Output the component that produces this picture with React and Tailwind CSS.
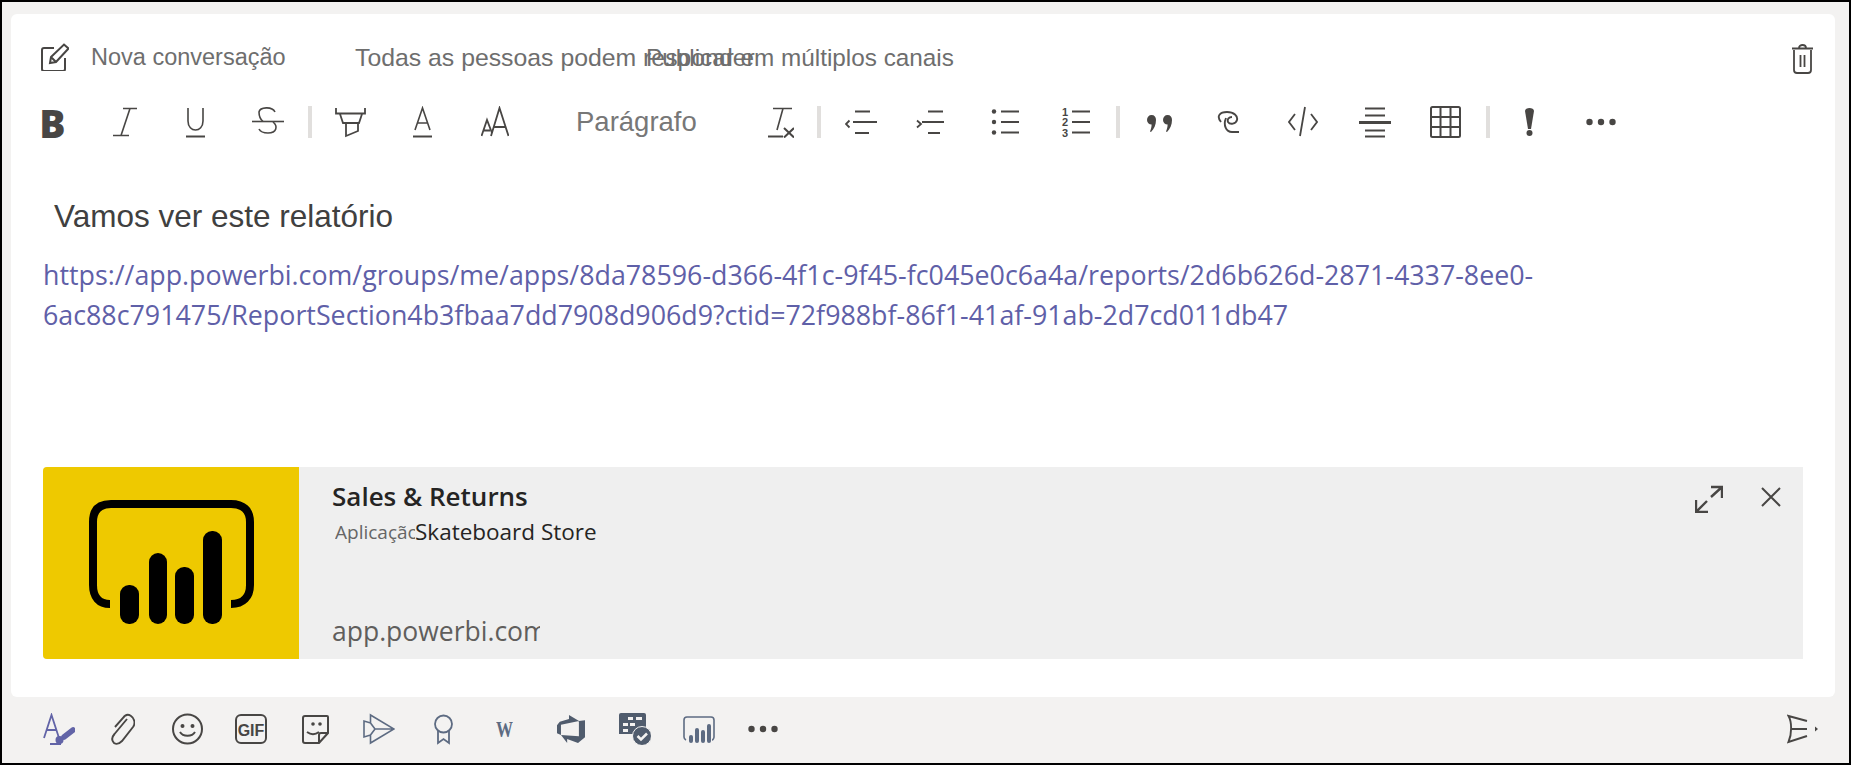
import React from 'react';
import { VscAzureDevops } from 'react-icons/vsc';

const INK = '#484644';
const SLATE = '#5d6b82';

// every toolbar icon is drawn in a box of w x h px, so it lines up with the row
const Ico = ({ w, h = 32, className = '', children, color = INK, sw = 1.6 }) => (
  <svg
    width={w}
    height={h}
    viewBox={`0 0 ${w} ${h}`}
    fill="none"
    stroke={color}
    strokeWidth={sw}
    className={`shrink-0 ${className}`}
  >
    {children}
  </svg>
);

const Sep = ({ className }) => <div className={`w-[4px] h-[32px] shrink-0 bg-[#e1dfdd] ${className}`} />;

const Dots = ({ className }) => (
  <Ico w={30} className={className}>
    <g fill={INK} stroke="none">
      <circle cx="3.5" cy="16" r="3.2" />
      <circle cx="15" cy="16" r="3.2" />
      <circle cx="26.5" cy="16" r="3.2" />
    </g>
  </Ico>
);

const FormatBar = () => (
  <div className="flex items-center h-[32px] mt-[34px] pl-[31px]">
    <div className="w-[21px] h-[32px] flex items-center justify-center shrink-0">
      <span className="font-['Open_Sans'] font-extrabold text-[39px] leading-none text-[#484644]">B</span>
    </div>
    <Ico w={24} className="ml-[50px]">
      <path d="M10 2.5H24M0 29.5H16M17 2.5L8 29.5" />
    </Ico>
    <Ico w={19} className="ml-[49px]">
      <path d="M2 2V15C2 27 17 27 17 15V2" />
      <path d="M0 30.5H19" strokeWidth="2" />
    </Ico>
    <Ico w={32} className="ml-[47px]">
      <path d="M23 6C20 0 8 1 7 6C7 10 8 13 11 15.5M21 16C26 20 25 27 16 27C11 27 8 25 7 23" />
      <path d="M0 15.5H32" />
    </Ico>
    <Sep className="ml-[24px]" />
    <Ico w={31} className="ml-[23px]" sw={1.8}>
      <path d="M1 2V7.5H30V2M5 8L8 17H24L27 8M11 17V30L23 25V17" />
    </Ico>
    <Ico w={19} className="ml-[47px]">
      <path d="M2 24L9.5 2L17 24M4.5 17H14.5" />
      <path d="M0 30.5H19" strokeWidth="2" />
    </Ico>
    <Ico w={28} className="ml-[49px]" sw={1.8}>
      <path d="M0.5 30L6 14L11 27M2.5 24.5H9" />
      <path d="M10 30L18.5 2L27.5 30M13 21H25" />
    </Ico>
    <span className="ml-[67px] w-[123px] shrink-0 font-['Liberation_Sans'] text-[27.5px] leading-none text-[#777]">Parágrafo</span>
    <Ico w={26} className="ml-[69px]">
      <path d="M5 2.5H24M15 2.5L9 24" />
      <path d="M0 30.5H15" strokeWidth="2" />
      <path d="M16 22L26 31.5M26 22L16 31.5" strokeWidth="2" />
    </Ico>
    <Sep className="ml-[23px]" />
    <Ico w={32} className="ml-[24px]" sw={1.8}>
      <path d="M4.5 14.5L1 18L4.5 21.5M10 5.5H25M8 16H32M10 27H24" />
    </Ico>
    <Ico w={28} className="ml-[39px]" sw={1.8}>
      <path d="M1 14.5L5 18L1 21.5M12 5.5H27M6 16H28M12 27H24" />
    </Ico>
    <Ico w={28} className="ml-[47px]" sw={1.8}>
      <path d="M10 5.5H28M10 16H28M10 26.5H28" />
      <g fill={INK} stroke="none">
        <circle cx="3" cy="5.5" r="2.2" />
        <circle cx="3" cy="16" r="2.2" />
        <circle cx="3" cy="26.5" r="2.2" />
      </g>
    </Ico>
    <Ico w={29} className="ml-[42px]" sw={1.8}>
      <path d="M11 5.5H29M11 16H29M11 26.5H29" />
      <g fill={INK} stroke="none" fontFamily="Liberation Sans" fontSize="11" fontWeight="700">
        <text x="1" y="10">1</text>
        <text x="1" y="20">2</text>
        <text x="1" y="31">3</text>
      </g>
    </Ico>
    <Sep className="ml-[26px]" />
    <Ico w={25} className="ml-[27px]">
      <g fill={INK} stroke="none">
        <path d="M4.5 9C7.5 9 9 11 9 14C9 19 7 23 4 26L3 25.5C4 23 4.6 21 4.6 18.5C2 18.5 0 16.5 0 14C0 11 2 9 4.5 9Z" />
        <path d="M20.5 9C23.5 9 25 11 25 14C25 19 23 23 20 26L19 25.5C20 23 20.6 21 20.6 18.5C18 18.5 16 16.5 16 14C16 11 18 9 20.5 9Z" />
      </g>
    </Ico>
    <Ico w={22} className="ml-[45px]" sw={1.9}>
      <path d="M4 16C-1 10 3 6 10 6C17 6 21 10 20 14C19 18 13 19 11 16C10 13 12 11 15 11" />
      <path d="M9 12C6 19 9 26 15 26H22" />
    </Ico>
    <Ico w={30} className="ml-[49px]" sw={1.8}>
      <path d="M7 8L1 16L7 24M23 8L29 16L23 24M17 1L12 30" />
    </Ico>
    <Ico w={32} className="ml-[41px]" sw={2}>
      <path d="M6 2.5H26M6 9.5H26M6 24.5H26M6 30.5H26" />
      <path d="M0 16.5H32" strokeWidth="3" />
    </Ico>
    <Ico w={31} className="ml-[39px]" sw={2}>
      <rect x="1" y="1" width="29" height="30" rx="1.5" />
      <path d="M10.5 1V31M20.5 1V31M1 11H30M1 21H30" />
    </Ico>
    <Sep className="ml-[25px]" />
    <Ico w={9} className="ml-[35px]">
      <g fill={INK} stroke="none">
        <path d="M0 5C0 1 9 1 9 5L6 23H3Z" />
        <circle cx="4.5" cy="27" r="3" />
      </g>
    </Ico>
    <Dots className="ml-[52px]" />
  </div>
);

const PowerBiMark = () => (
  <svg width="256" height="192" viewBox="0 0 256 192" fill="none" className="shrink-0">
    <path
      d="M67 137C56 137 50 130 50 118V55C50 43 56 37 68 37H188C200 37 207 43 207 55V118C207 130 200 137 188 137"
      stroke="#000"
      strokeWidth="8"
    />
    <g fill="#000">
      <rect x="77" y="118" width="19" height="39" rx="9" />
      <rect x="106" y="86" width="18" height="71" rx="9" />
      <rect x="132" y="100" width="19" height="57" rx="9" />
      <rect x="160" y="64" width="19" height="93" rx="9" />
    </g>
  </svg>
);

const LinkCard = () => (
  <div className="flex h-[192px] mt-[132px] ml-[32px] mr-[32px] bg-[#efefef] rounded-l-[4px] overflow-hidden">
    <div className="w-[256px] bg-[#eec900] shrink-0">
      <PowerBiMark />
    </div>
    <div className="flex-1 flex flex-col pl-[33px] font-['Open_Sans'] min-w-0">
      <div className="mt-[14px] text-[26px] leading-[30px] font-semibold text-[#252423]">Sales &amp; Returns</div>
      <div className="mt-[7px] flex items-center h-[28px] text-[22.5px] text-[#252423]">
        <span className="ml-[3px] w-[80px] overflow-hidden whitespace-nowrap text-[19px] text-[#666]">Aplicação</span>
        <span>Skateboard Store</span>
      </div>
      <div className="mt-auto mb-[12px] w-[208px] overflow-hidden whitespace-nowrap text-[26.5px] leading-[32px] text-[#605e5c]">app.powerbi.com</div>
    </div>
    <div className="flex items-start pt-[18px] pr-[22px] gap-[38px]">
      <Ico w={28} h={28} sw={2.4}>
        <path d="M16 2H27V13M27 2L16 12M1 15V27H13M1 27L12 16" />
      </Ico>
      <Ico w={20} h={22} sw={2} className="mt-[1px]">
        <path d="M1 2L19 20M19 2L1 20" />
      </Ico>
    </div>
  </div>
);

const BottomBar = () => (
  <div className="flex-1 flex items-center pb-[2px] pl-[41px] pr-[31px]">
    <Ico w={32} color="#6264a7" sw={1.8}>
      <path d="M1 25L8.5 2L16 25M3.5 17H13.5" />
      <path d="M7 31H18" strokeWidth="2" />
      <path d="M21 24L30 17" strokeWidth="5.5" strokeLinecap="round" />
      <circle cx="16.5" cy="27" r="4" fill="#6264a7" stroke="none" />
    </Ico>
    <Ico w={25} className="ml-[35px]" sw={1.9}>
      <path d="M17 6L4.5 21C1 25 2 28 4 30C7 32 10 30 12 28L23 14C26 10 24 5 21 3C18 1 15 2 13 5L5 14" />
    </Ico>
    <Ico w={31} className="ml-[37px]" sw={2}>
      <circle cx="15.5" cy="16" r="14.5" />
      <path d="M8 19C11 24 20 24 23 19" />
      <g fill={INK} stroke="none">
        <circle cx="10.5" cy="13" r="2" />
        <circle cx="20.5" cy="13" r="2" />
      </g>
    </Ico>
    <Ico w={32} className="ml-[32px]" sw={2}>
      <rect x="1" y="2" width="30" height="28" rx="5" />
      <text x="16" y="22.5" textAnchor="middle" fontFamily="Liberation Sans" fontWeight="700" fontSize="16" fill={INK} stroke="none">GIF</text>
    </Ico>
    <Ico w={27} className="ml-[35px]" sw={2}>
      <path d="M3 3H25Q26 3 26 4V20L17 30H3Q1 30 1 28V5Q1 3 3 3Z" />
      <path d="M26 20H19Q17 20 17 22V30" />
      <path d="M5 19C9 22 13 22 17 19" />
      <g fill={INK} stroke="none">
        <circle cx="11" cy="11" r="1.8" />
        <circle cx="18" cy="11" r="1.8" />
      </g>
    </Ico>
    <Ico w={32} className="ml-[34px]" color={SLATE}>
      <path d="M7.5 2L31 16L7.5 30L7.5 22L1 24V8L7.5 10ZM7.5 10L12 16L7.5 22M12 16H31" />
    </Ico>
    <Ico w={19} className="ml-[39px]" color={SLATE} sw={1.8}>
      <circle cx="9.5" cy="11" r="8.5" />
      <path d="M4 18V30L9.5 26L15 30V18" />
    </Ico>
    <Ico w={17} className="ml-[43px]">
      <text x="0" y="24" textLength="17" lengthAdjust="spacingAndGlyphs" fontFamily="Liberation Serif" fontWeight="700" fontSize="23" fill={SLATE} stroke="none">W</text>
    </Ico>
    <VscAzureDevops size={32} color="#505c6d" className="ml-[42px] shrink-0" />
    <Ico w={32} className="ml-[32px]">
      <path d="M0 2Q0 0 2 0H25Q27 0 27 2V21H0Z" fill="#505c6d" stroke="none" />
      <g fill="#f3f2f1" stroke="none">
        <rect x="9" y="4" width="5" height="3" />
        <rect x="17" y="4" width="6" height="3" />
        <rect x="4" y="10" width="5" height="3" />
        <rect x="11" y="10" width="5" height="3" />
        <rect x="4" y="16" width="5" height="3" />
      </g>
      <circle cx="23" cy="23" r="9.5" fill="#505c6d" stroke="#f3f2f1" strokeWidth="1" />
      <path d="M18.5 23L22 26.5L28 20.5" stroke="#f3f2f1" strokeWidth="2.5" />
    </Ico>
    <Ico w={32} className="ml-[32px]" color={SLATE} sw={1.6}>
      <path d="M3 27C1 26 1 25 1 24V7Q1 4 4 4H28Q31 4 31 7V24C31 25 30 27 29 27" />
      <g fill={SLATE} stroke="none">
        <rect x="6" y="22" width="4" height="8" rx="2" />
        <rect x="12" y="15" width="4" height="15" rx="2" />
        <rect x="18" y="17" width="4" height="13" rx="2" />
        <rect x="24" y="11" width="4" height="19" rx="2" />
      </g>
    </Ico>
    <Dots className="ml-[33px]" />
    <Ico w={31} className="ml-auto" sw={1.9}>
      <path d="M20 8L1.5 3C5 9 5 21 1.5 29L20 23M4 16H20" />
      <path d="M28 13.5L31 16L28 18.5Z" fill={INK} stroke="none" />
    </Ico>
  </div>
);

export default function App() {
  return (
    <div className="h-screen border-2 border-black bg-[#f3f2f1] flex flex-col font-['Liberation_Sans',sans-serif]">
      <div className="h-[683px] mt-[12px] ml-[9px] mr-[14px] bg-white rounded-[6px] flex flex-col shrink-0">
        <div className="flex items-center h-[28px] mt-[30px] pl-[30px] pr-[22px] text-[24.3px] leading-none text-[#6e6e6e] whitespace-nowrap">
          <Ico w={28} h={28} sw={2} className="-mt-[2px]">
            <path d="M13 5H3Q1 5 1 7V26Q1 28 3 28H22Q24 28 24 26V15" />
            <path d="M9 20L10 14L23 1.5L27.5 5.5L15 19ZM10 14L15 19" />
          </Ico>
          <span className="ml-[22px] w-[264px] shrink-0 text-[23.5px]">Nova conversação</span>
          <span className="w-[291px] shrink-0 text-[24.8px]">Todas as pessoas podem responder</span>
          <span>Publicar em múltiplos canais</span>
          <Ico w={21} h={31} className="ml-auto" sw={1.8}>
            <path d="M0 5.5H21M7 5C7 1 14 1 14 5" />
            <path d="M2 7V27Q2 30 5 30H16Q19 30 19 27V7M8.5 12V24M12.5 12V24" />
          </Ico>
        </div>
        <FormatBar />
        <div className="mt-[58px] pl-[43px] font-['Liberation_Sans'] text-[31.5px] leading-[40px] text-[#404040]">Vamos ver este relatório</div>
        <div className="mt-[19px] ml-[32px] w-[1520px] font-['Open_Sans'] text-[26.8px] leading-[40px] text-[#5f60a8] whitespace-nowrap">
          https://app.powerbi.com/groups/me/apps/8da78596-d366-4f1c-9f45-fc045e0c6a4a/reports/2d6b626d-2871-4337-8ee0-
          <br />
          6ac88c791475/ReportSection4b3fbaa7dd7908d906d9?ctid=72f988bf-86f1-41af-91ab-2d7cd011db47
        </div>
        <LinkCard />
      </div>
      <BottomBar />
    </div>
  );
}
